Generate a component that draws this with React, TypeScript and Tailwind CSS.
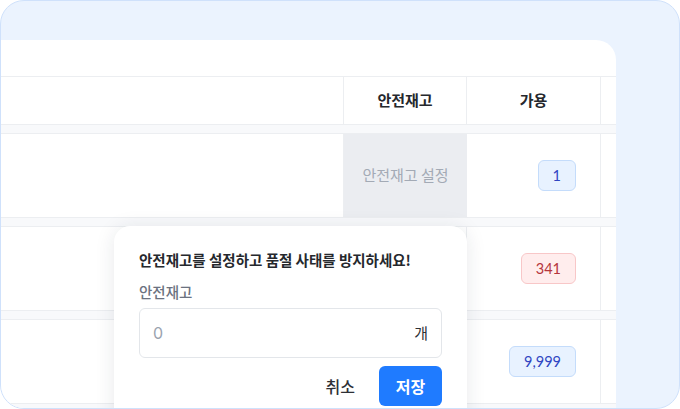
import React from 'react';

const kr = { fontFamily: '"Noto Sans CJK KR", "Noto Sans", sans-serif' };

type Row = { id: string; available: string; tone: 'blue' | 'red'; setCell?: boolean };

const rows: Row[] = [
  { id: 'r1', available: '1', tone: 'blue', setCell: true },
  { id: 'r2', available: '341', tone: 'red' },
  { id: 'r3', available: '9,999', tone: 'blue' }
];

function Badge({ value, tone }: { value: string; tone: 'blue' | 'red' }) {
  const cls =
    tone === 'red'
      ? 'bg-[#ffeded] border-[#f8c7c8] text-[#b5363c]'
      : 'bg-[#e8f2ff] border-[#c4dcfb] text-[#2f45c2]';
  return (
    <span
      className={`inline-flex h-[31px] items-center rounded-[6px] border px-[14px] text-[14.5px] ${cls}`}
      style={{ fontFamily: 'Lato, "Noto Sans", sans-serif' }}
    >
      {value}
    </span>
  );
}

function Band() {
  return <div className="h-[10px] border-y border-[#eceef1] bg-[#f8f9fb]" />;
}

export default function App() {
  return (
    <div
      className="relative h-[409px] w-[680px] overflow-hidden rounded-[24px] border border-[#cfe1fb] bg-[#ebf3fe] pr-[63px] pt-[39px]"
      style={kr}
    >
      <div className="h-[400px] overflow-hidden rounded-tr-[20px] bg-white">
        <div className="h-[36px]" />
        <div className="w-[800px]">
          <div className="grid h-[48px] grid-cols-[343px_123px_134px_200px] border-t border-[#eceef1] text-[15px] font-semibold text-[#25282d]">
            <div className="border-r border-[#eceef1]" />
            <div className="flex items-center justify-center border-r border-[#eceef1]">안전재고</div>
            <div className="flex items-center justify-center border-r border-[#eceef1]">가용</div>
            <div />
          </div>
          <Band />
          {rows.map((row) => (
            <div key={row.id}>
              <div className="grid h-[83px] grid-cols-[343px_123px_134px_200px]">
                <div className="border-r border-[#eceef1]" />
                {row.setCell ? (
                  <div className="flex items-center justify-center bg-[#ebedf1] text-[15px] text-[#a3aab5]">
                    안전재고 설정
                  </div>
                ) : (
                  <div className="border-r border-[#eceef1]" />
                )}
                <div className="flex items-center justify-end border-r border-[#eceef1] pr-[24px]">
                  <Badge value={row.available} tone={row.tone} />
                </div>
                <div />
              </div>
              <Band />
            </div>
          ))}
        </div>
      </div>

      <div className="absolute left-[113px] top-[225px] h-[220px] w-[353px] rounded-t-[16px] bg-white px-[25px] pt-[24px] shadow-[0_2px_20px_rgba(30,40,60,0.10)]">
        <p className="text-[14.5px] font-semibold leading-[20px] text-[#25282d]">
          안전재고를 설정하고 품절 사태를 방지하세요!
        </p>
        <p className="mt-[12px] text-[14.5px] font-medium leading-[20px] text-[#6b7280]">안전재고</p>
        <div className="mt-[6px] flex h-[50px] items-center justify-between rounded-[6px] border border-[#e3e6ea] px-[13px]">
          <span className="text-[16px] text-[#9aa3af]" style={{ fontFamily: 'Inter, sans-serif' }}>0</span>
          <span className="text-[15px] text-[#2d3036]">개</span>
        </div>
        <div className="mt-[8px] flex justify-end gap-[12px]">
          <button className="h-[40px] px-[12px] text-[16px] font-medium text-[#2d3036]">취소</button>
          <button className="h-[40px] w-[63px] rounded-[6px] bg-[#1f7bff] text-[16px] font-bold text-white">저장</button>
        </div>
      </div>
    </div>
  );
}
